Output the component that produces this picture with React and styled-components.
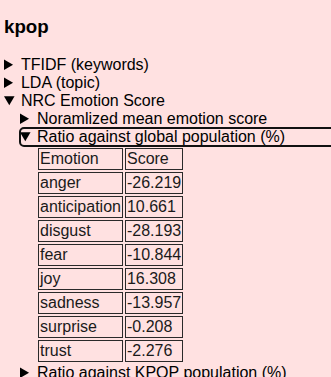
import React from "react";
import styled, { createGlobalStyle } from "styled-components";

const GlobalStyle = createGlobalStyle`
  html {
    overflow: hidden;
    background-color: #ffe1e1;
  }
  body {
    margin: 0;
    font-family: "Liberation Sans", Arial, sans-serif;
    color: #000;
  }
`;

const Page = styled.div`
  padding: 0 4px;
  font-size: 16px;
`;

const Title = styled.h3`
  font-size: 18.72px;
  font-weight: bold;
  margin: 16px 0 18px;
`;

const Section = styled.details`
  margin-left: ${(p) => (p.$nested ? "16px" : "0")};
`;

const Summary = styled.summary`
  cursor: pointer;
  line-height: 18px;
  border-radius: 4px;
  outline: ${(p) => (p.$focused ? "2px solid #111" : "none")};
  outline-offset: -1px;
  width: ${(p) => (p.$focused ? "360px" : "auto")};
`;

const Table = styled.table`
  margin-left: 16px;
  border-spacing: 2px;
  border-collapse: separate;
`;

const Cell = styled.td`
  border: 1px solid #2a2a2a;
  padding: 1px;
  line-height: 18px;
  color: #1a1a1a;
`;

const scores = [
  ["anger", "-26.219"],
  ["anticipation", "10.661"],
  ["disgust", "-28.193"],
  ["fear", "-10.844"],
  ["joy", "16.308"],
  ["sadness", "-13.957"],
  ["surprise", "-0.208"],
  ["trust", "-2.276"],
];

export default function App() {
  return (
    <>
      <GlobalStyle />
      <Page>
        <Title>kpop</Title>
        <Section>
          <Summary>TFIDF (keywords)</Summary>
        </Section>
        <Section>
          <Summary>LDA (topic)</Summary>
        </Section>
        <Section open>
          <Summary>NRC Emotion Score</Summary>
          <Section $nested>
            <Summary>Noramlized mean emotion score</Summary>
          </Section>
          <Section $nested open>
            <Summary $focused>Ratio against global population (%)</Summary>
            <Table>
              <tbody>
                <tr>
                  <Cell>Emotion</Cell>
                  <Cell>Score</Cell>
                </tr>
                {scores.map(([emotion, score]) => (
                  <tr key={emotion}>
                    <Cell>{emotion}</Cell>
                    <Cell>{score}</Cell>
                  </tr>
                ))}
              </tbody>
            </Table>
          </Section>
          <Section $nested>
            <Summary>Ratio against KPOP population (%)</Summary>
          </Section>
        </Section>
      </Page>
    </>
  );
}
